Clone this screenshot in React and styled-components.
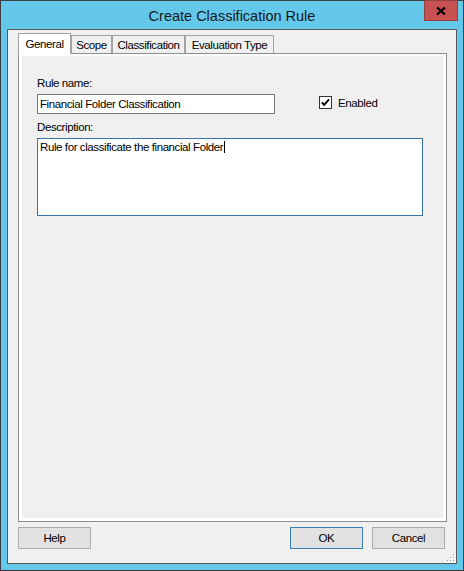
import React from 'react';
import styled, { createGlobalStyle } from 'styled-components';

const GlobalStyle = createGlobalStyle`
  html, body { margin: 0; padding: 0; background: #ffffff; }
  body { font-family: "Liberation Sans", Arial, sans-serif; }
  *, *::before, *::after { box-sizing: border-box; }
`;

const textFont = `
  font-size: 11.5px;
  line-height: 13px;
  letter-spacing: -0.4px;
  color: #000;
`;

const Window = styled.div`
  width: 464px;
  height: 571px;
  background: #63c8ea;
  border: 1px solid #3d3d3d;
  display: flex;
  flex-direction: column;
`;

const TitleBar = styled.div`
  height: 28px;
  display: grid;
  grid-template-columns: 1fr auto 1fr;
`;

const Title = styled.div`
  grid-column: 2;
  padding-top: 2px;
  line-height: 26px;
  font-size: 14.5px;
  color: #1a1a1a;
  white-space: nowrap;
`;

const CloseButton = styled.div`
  grid-column: 3;
  justify-self: end;
  align-self: start;
  width: 34px;
  height: 21px;
  margin: -1px 5px 0 0;
  background: #c75050;
  border: 1px solid #8e3f3f;
  display: flex;
  align-items: center;
  justify-content: center;
`;

const Client = styled.div`
  position: relative;
  margin: 0 6px;
  height: 535px;
  border: 1px solid #5a5a5a;
  background: #f0f0f0;
  padding: 3px 9px 14px 10px;
  display: flex;
  flex-direction: column;
`;

const TabStrip = styled.div`
  height: 20px;
  display: flex;
  align-items: flex-end;
`;

const Tab = styled.div`
  position: relative;
  width: ${(p) => p.$w}px;
  height: ${(p) => (p.$active ? 21 : 18)}px;
  margin-bottom: ${(p) => (p.$active ? -1 : 0)}px;
  z-index: ${(p) => (p.$active ? 1 : 0)};
  padding-top: ${(p) => (p.$active ? 4 : 3)}px;
  background: ${(p) => (p.$active ? '#ffffff' : '#f0f0f0')};
  border: 1px solid #a3a3a3;
  border-bottom: none;
  ${textFont}
  text-align: center;
  white-space: nowrap;
`;

const Panel = styled.div`
  height: 469px;
  border: 1px solid #8f8f8f;
  background: #ffffff;
  padding: 2px 3px 3px 3px;
  display: flex;
`;

const Page = styled.div`
  flex: 1;
  background: #f0f0f0;
  padding: 21px 0 0 15px;
  display: flex;
  flex-direction: column;
  align-items: flex-start;
`;

const FieldLabel = styled.div`
  ${textFont}
  margin-top: ${(p) => p.$mt || 0}px;
  margin-bottom: 4px;
  white-space: nowrap;
`;

const InlineRow = styled.div`
  display: flex;
  align-items: flex-start;
`;

const TextBox = styled.div`
  width: 238px;
  height: 20px;
  border: 1px solid #7a7a7a;
  background: #ffffff;
  padding: 0 2px;
  ${textFont}
  line-height: 18px;
  white-space: nowrap;
  overflow: hidden;
`;

const CheckLabel = styled.div`
  display: flex;
  align-items: flex-start;
  gap: 6px;
  margin: 2px 0 0 44px;
`;

const CheckText = styled.span`
  margin-top: 1px;
  ${textFont}
`;

const TextArea = styled.div`
  width: 386px;
  height: 78px;
  border: 1px solid #3a73a8;
  background: #ffffff;
  padding: 2px;
  ${textFont}
`;

const Caret = styled.span`
  display: inline-block;
  width: 1px;
  height: 12px;
  margin-left: 1px;
  background: #000;
  vertical-align: -2px;
`;

const ButtonRow = styled.div`
  margin-top: 5px;
  display: flex;
  justify-content: space-between;
`;

const ButtonGroup = styled.div`
  display: flex;
  gap: 9px;
  margin-right: 2px;
`;

const Button = styled.div`
  width: 73px;
  height: 22px;
  border: 1px solid ${(p) => (p.$default ? '#3c7fb1' : '#adadad')};
  background: #e1e1e1;
  ${textFont}
  line-height: 20px;
  text-align: center;
`;

const Grip = styled.svg`
  position: absolute;
  right: 1px;
  bottom: 1px;
`;

const CheckBox = () => (
  <svg width="13" height="13" viewBox="0 0 13 13">
    <rect x="0.5" y="0.5" width="12" height="12" fill="#fff" stroke="#333" />
    <path d="M2.8 6.3 L5.2 8.8 L10 3.4" fill="none" stroke="#000" strokeWidth="1.9" />
  </svg>
);

const tabs = [
  { label: 'General', w: 53, active: true },
  { label: 'Scope', w: 41 },
  { label: 'Classification', w: 73 },
  { label: 'Evaluation Type', w: 89 },
];

export default function App() {
  return (
    <>
      <GlobalStyle />
      <Window>
        <TitleBar>
          <Title>Create Classification Rule</Title>
          <CloseButton>
            <svg width="10" height="8" viewBox="0 0 10 8">
              <path d="M1 0.5 L9 7.5 M9 0.5 L1 7.5" stroke="#000" strokeWidth="2.2" />
            </svg>
          </CloseButton>
        </TitleBar>
        <Client>
          <TabStrip>
            {tabs.map((t) => (
              <Tab key={t.label} $w={t.w} $active={t.active}>
                {t.label}
              </Tab>
            ))}
          </TabStrip>
          <Panel>
            <Page>
              <FieldLabel>Rule name:</FieldLabel>
              <InlineRow>
                <TextBox>Financial Folder Classification</TextBox>
                <CheckLabel>
                  <CheckBox />
                  <CheckText>Enabled</CheckText>
                </CheckLabel>
              </InlineRow>
              <FieldLabel $mt={7}>Description:</FieldLabel>
              <TextArea>
                Rule for classificate the financial Folder
                <Caret />
              </TextArea>
            </Page>
          </Panel>
          <ButtonRow>
            <Button>Help</Button>
            <ButtonGroup>
              <Button $default>OK</Button>
              <Button>Cancel</Button>
            </ButtonGroup>
          </ButtonRow>
          <Grip width="9" height="9" viewBox="0 0 9 9">
            <g fill="#a0a0a0">
              <rect x="7" y="1" width="1" height="1" />
              <rect x="4" y="4" width="1" height="1" />
              <rect x="7" y="4" width="1" height="1" />
              <rect x="1" y="7" width="1" height="1" />
              <rect x="4" y="7" width="1" height="1" />
              <rect x="7" y="7" width="1" height="1" />
            </g>
            <g fill="#ffffff">
              <rect x="8" y="2" width="1" height="1" />
              <rect x="5" y="5" width="1" height="1" />
              <rect x="8" y="5" width="1" height="1" />
              <rect x="2" y="8" width="1" height="1" />
              <rect x="5" y="8" width="1" height="1" />
              <rect x="8" y="8" width="1" height="1" />
            </g>
          </Grip>
        </Client>
      </Window>
    </>
  );
}
